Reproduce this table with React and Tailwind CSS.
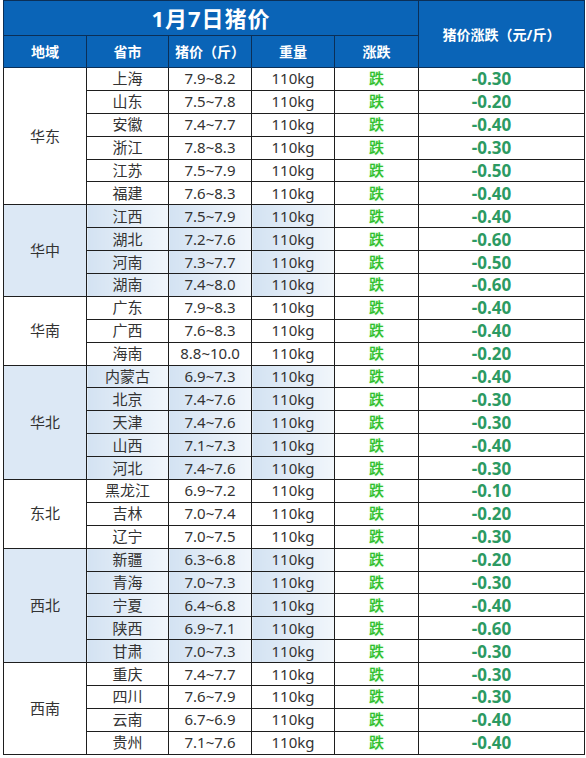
import React from "react";

const grupos = [
  {
    region: "华东",
    azul: false,
    filas: [
      ["上海", "7.9~8.2", "-0.30"],
      ["山东", "7.5~7.8", "-0.20"],
      ["安徽", "7.4~7.7", "-0.40"],
      ["浙江", "7.8~8.3", "-0.30"],
      ["江苏", "7.5~7.9", "-0.50"],
      ["福建", "7.6~8.3", "-0.40"],
    ],
  },
  {
    region: "华中",
    azul: true,
    filas: [
      ["江西", "7.5~7.9", "-0.40"],
      ["湖北", "7.2~7.6", "-0.60"],
      ["河南", "7.3~7.7", "-0.50"],
      ["湖南", "7.4~8.0", "-0.60"],
    ],
  },
  {
    region: "华南",
    azul: false,
    filas: [
      ["广东", "7.9~8.3", "-0.40"],
      ["广西", "7.6~8.3", "-0.40"],
      ["海南", "8.8~10.0", "-0.20"],
    ],
  },
  {
    region: "华北",
    azul: true,
    filas: [
      ["内蒙古", "6.9~7.3", "-0.40"],
      ["北京", "7.4~7.6", "-0.30"],
      ["天津", "7.4~7.6", "-0.30"],
      ["山西", "7.1~7.3", "-0.40"],
      ["河北", "7.4~7.6", "-0.30"],
    ],
  },
  {
    region: "东北",
    azul: false,
    filas: [
      ["黑龙江", "6.9~7.2", "-0.10"],
      ["吉林", "7.0~7.4", "-0.20"],
      ["辽宁", "7.0~7.5", "-0.30"],
    ],
  },
  {
    region: "西北",
    azul: true,
    filas: [
      ["新疆", "6.3~6.8", "-0.20"],
      ["青海", "7.0~7.3", "-0.30"],
      ["宁夏", "6.4~6.8", "-0.40"],
      ["陕西", "6.9~7.1", "-0.60"],
      ["甘肃", "7.0~7.3", "-0.30"],
    ],
  },
  {
    region: "西南",
    azul: false,
    filas: [
      ["重庆", "7.4~7.7", "-0.30"],
      ["四川", "7.6~7.9", "-0.30"],
      ["云南", "6.7~6.9", "-0.40"],
      ["贵州", "7.1~7.6", "-0.40"],
    ],
  },
];

export default function App() {
  const celda = "border border-[#1e1e1e] p-0 text-center";
  // celdas con degradado en los grupos azules
  const celdaAzul = "bg-gradient-to-r from-[#d3e2f2] to-[#f1f6fb]";

  return (
    <div className="w-[586px] h-[758px] bg-white pl-[3px] font-['Noto_Sans','Noto_Sans_CJK_SC',sans-serif] text-[#333]">
      <table className="w-[581px] table-fixed border-collapse">
        <colgroup>
          <col className="w-[83px]" />
          <col className="w-[82px]" />
          <col className="w-[83px]" />
          <col className="w-[83px]" />
          <col className="w-[84px]" />
          <col className="w-[166px]" />
        </colgroup>
        <thead className="bg-[#0a64b7] text-white">
          <tr className="h-[35px]">
            <th colSpan={5} className="border border-[#0b2f57] text-[22px] font-bold tracking-[1px]">
              1月7日猪价
            </th>
            <th rowSpan={2} className="border border-[#0b2f57] text-[14px] font-bold">
              猪价涨跌（元/斤）
            </th>
          </tr>
          <tr className="h-[32px] text-[14px]">
            <th className="border border-[#0b2f57] font-bold">地域</th>
            <th className="border border-[#0b2f57] font-bold">省市</th>
            <th className="border border-[#0b2f57] font-bold">猪价（斤）</th>
            <th className="border border-[#0b2f57] font-bold">重量</th>
            <th className="border border-[#0b2f57] font-bold">涨跌</th>
          </tr>
        </thead>
        <tbody className="text-[15px]">
          {grupos.map((g) =>
            g.filas.map((f, i) => (
              <tr key={g.region + f[0]} className="h-[22.9px] leading-none">
                {i === 0 && (
                  <td
                    rowSpan={g.filas.length}
                    className={`${celda} text-[15px] ${g.azul ? "bg-[#dce8f5]" : "bg-white"}`}
                  >
                    {g.region}
                  </td>
                )}
                <td className={`${celda} ${g.azul ? celdaAzul : ""}`}>{f[0]}</td>
                <td className={`${celda} ${g.azul ? celdaAzul : ""}`}>{f[1]}</td>
                <td className={`${celda} ${g.azul ? celdaAzul : ""}`}>110kg</td>
                <td className={`${celda} text-[#2fbf2f] font-medium [text-shadow:0_0_2px_#b8f5b8]`}>跌</td>
                <td className={`${celda} pr-[20px] text-[17px] font-bold text-[#2c9a62]`}>{f[2]}</td>
              </tr>
            ))
          )}
        </tbody>
      </table>
    </div>
  );
}
